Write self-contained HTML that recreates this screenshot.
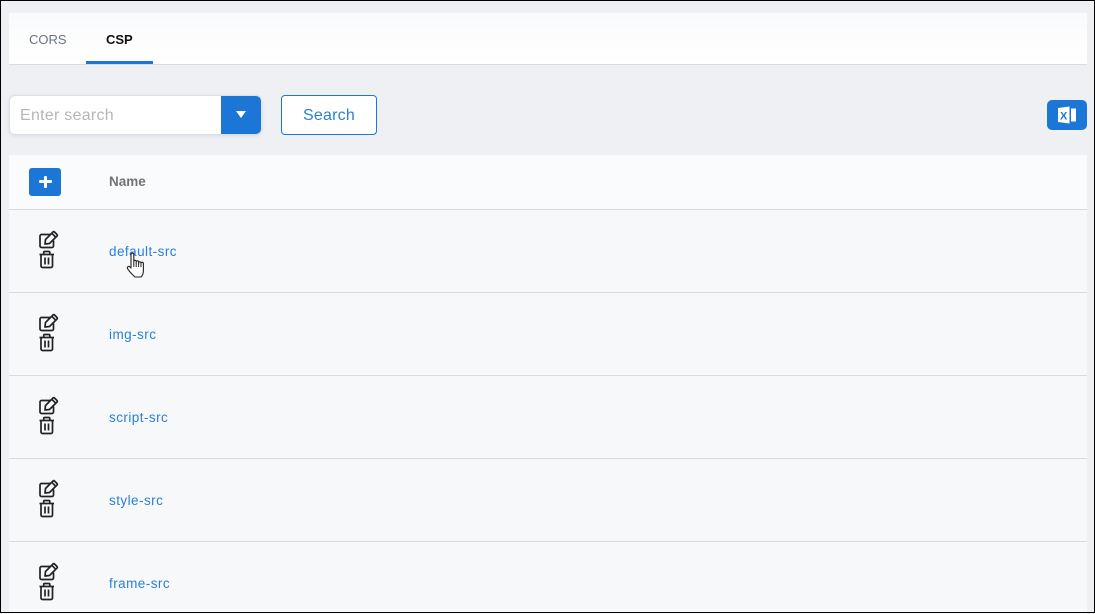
<!DOCTYPE html>
<html>
<head>
<meta charset="utf-8">
<style>
html,body{margin:0;padding:0}
body{width:1095px;height:613px;overflow:hidden;background:#eef0f4;font-family:"Liberation Sans",sans-serif;position:relative}
.a{position:absolute}
.frame{left:0;top:0;width:1093px;height:611px;border:1px solid #000;z-index:50;pointer-events:none}
.tabs{left:9px;top:13px;width:1078px;height:51px;background:linear-gradient(#f9fafb,#ffffff);border-bottom:1px solid #d8dbe0}
.t{white-space:nowrap}
.row{left:9px;width:1078px;height:82px;background:#f7f8fa;border-bottom:1px solid #d9dbdf}
.link{left:109px;font-size:13.5px;color:#2b7fd8;white-space:nowrap;letter-spacing:.45px}
</style>
</head>
<body>
<div class="a tabs"></div>
<div class="a t" style="left:29px;top:32px;color:#6b7480;font-size:13px">CORS</div>
<div class="a t" style="left:106px;top:32px;color:#111;font-weight:bold;font-size:13px">CSP</div>
<div class="a" style="left:86px;top:61px;width:67px;height:3px;background:#1b76d6"></div>

<div class="a" style="left:10px;top:96px;width:251px;height:38px;background:#fff;border-radius:5px;box-shadow:0 0 0 1px #dcdfe5,0 1px 4px rgba(90,100,130,.22)"></div>
<div class="a" style="left:221px;top:96px;width:40px;height:38px;background:#1b76d6;border-radius:0 5px 5px 0"></div>
<div class="a" style="left:236px;top:111px;width:0;height:0;border-left:5.500px solid transparent;border-right:5.500px solid transparent;border-top:7px solid #fff"></div>
<div class="a" style="left:20px;top:107px;font-size:16px;letter-spacing:.27px;color:#b4b6ba;white-space:nowrap">Enter search</div>
<div class="a" style="left:281px;top:95px;width:94px;height:38px;background:#fff;border:1px solid #1b76d6;border-radius:4px;text-align:center;line-height:40px;font-size:16px;letter-spacing:.2px;color:#2b7fd8">Search</div>

<div class="a" style="left:1047px;top:100px;width:40px;height:30px;background:#1b76d6;border-radius:5px"></div>
<svg class="a" style="left:1047px;top:100px" width="40" height="30" viewBox="0 0 40 30">
  <path d="M11 8 L22.500 6.500 V23.500 L11 22Z" fill="#fff"/>
  <rect x="24" y="8.500" width="5" height="13" fill="#fff"/>
  <text x="13" y="19.500" font-size="11" font-weight="bold" fill="#1b76d6" font-family="Liberation Sans, sans-serif">X</text>
</svg>

<div class="a" style="left:9px;top:155px;width:1078px;height:54px;background:#fafbfd;border-bottom:1px solid #d9dbdf"></div>
<div class="a" style="left:29px;top:168px;width:32px;height:28px;background:#1b76d6;border-radius:3px"></div>
<div class="a" style="left:38.500px;top:180px;width:13px;height:3px;background:#fff;border-radius:1px"></div>
<div class="a" style="left:43.500px;top:175.500px;width:3px;height:12px;background:#fff;border-radius:1px"></div>
<div class="a" style="left:109px;top:174px;font-size:13.500px;font-weight:bold;color:#70747a;white-space:nowrap">Name</div>

<svg width="0" height="0" style="position:absolute">
  <defs>
    <g id="ic" fill="none" stroke="#222" stroke-width="1.700">
      <path d="M12.500 4.500 H3.500 a1.500 1.500 0 0 0 -1.500 1.500 V16 a1.500 1.500 0 0 0 1.500 1.500 H14 a1.500 1.500 0 0 0 1.500 -1.500 V10.500"/>
      <path d="M7.500 9.500 L15 2 a1 1 0 0 1 1.500 0 L19 4.500 a1 1 0 0 1 0 1.500 L11.500 13.500 L7 14Z" stroke-linejoin="round"/>
      <path d="M13.800 3.300 L17.700 7.200"/>
      <path d="M1.500 24.500 H16"/>
      <path d="M5.700 24.500 V22.500 a1 1 0 0 1 1 -1 H10.800 a1 1 0 0 1 1 1 V24.500"/>
      <path d="M3 24.500 V36 a1.500 1.500 0 0 0 1.500 1.500 H13 a1.500 1.500 0 0 0 1.500 -1.500 V24.500"/>
      <path d="M7 27.500 V34.500 M10.500 27.500 V34.500"/>
    </g>
  </defs>
</svg>

<div class="a row" style="top:210px"></div>
<div class="a row" style="top:293px"></div>
<div class="a row" style="top:376px"></div>
<div class="a row" style="top:459px"></div>
<div class="a row" style="top:542px;height:72px;border-bottom:0"></div>

<svg class="a" style="left:38px;top:230px" width="22" height="40" viewBox="0 0 22 40"><use href="#ic"/></svg>
<svg class="a" style="left:38px;top:313px" width="22" height="40" viewBox="0 0 22 40"><use href="#ic"/></svg>
<svg class="a" style="left:38px;top:396px" width="22" height="40" viewBox="0 0 22 40"><use href="#ic"/></svg>
<svg class="a" style="left:38px;top:479px" width="22" height="40" viewBox="0 0 22 40"><use href="#ic"/></svg>
<svg class="a" style="left:38px;top:562px" width="22" height="40" viewBox="0 0 22 40"><use href="#ic"/></svg>

<div class="a link" style="top:244px">default-src</div>
<div class="a link" style="top:327px">img-src</div>
<div class="a link" style="top:410px">script-src</div>
<div class="a link" style="top:493px">style-src</div>
<div class="a link" style="top:576px">frame-src</div>

<svg class="a" style="left:126px;top:252px;z-index:5" width="20" height="27" viewBox="0 0 20 27">
  <path d="M5 2.500 a1.400 1.400 0 0 1 2.800 0 V10 V9.500 a1.200 1.200 0 0 1 2.400 0 V11 V10 a1.200 1.200 0 0 1 2.400 0 V11.500 V11 a1.200 1.200 0 0 1 2.400 0 V11.500 a1.200 1.200 0 0 1 2.400 0 V18 C17.500 21 16.500 23.500 15 25 H9 C6.500 22.500 3 19.500 1.500 16.500 C0.800 15 2.800 13.500 4 15 L5 16Z" fill="#fff" stroke="#222" stroke-width="1.100" stroke-linejoin="round"/>
  <path d="M7.800 10 V15 M10.200 11 V15 M12.600 11.500 V15 M15 11.500 V15" stroke="#222" stroke-width="1" fill="none"/>
</svg>

<div class="a frame"></div>
</body>
</html>
